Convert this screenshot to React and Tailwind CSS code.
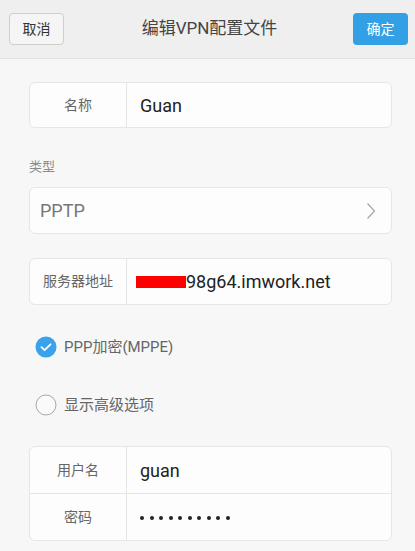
import React from "react";

const font = { fontFamily: 'Roboto, "Noto Sans CJK SC", sans-serif' };

function FieldRow({label, children, last, height}) {
    return (
        <div className={"flex " + height + " " + (last ? "" : "border-b border-[#e6e6e6]")}>
            <div className="w-[97px] shrink-0 flex items-center justify-center border-r border-[#e6e6e6] text-[14px] text-[#666]">
                {label}
            </div>
            <div className="flex items-center pl-[13px] text-[18px] text-[#222]">
                {children}
            </div>
        </div>
    );
}

function Check({checked, label}) {
    return (
        <div className="flex items-center h-[22px] pl-[6px]">
            {checked ? (
                <svg width="22" height="22" viewBox="0 0 22 22">
                    <circle cx="11" cy="11" r="10.5" fill="#3aa2eb"/>
                    <path d="M6.5 11.2 L9.6 14.2 L15.5 8.3" fill="none" stroke="#fff" strokeWidth="1.8" strokeLinecap="round" strokeLinejoin="round"/>
                </svg>
            ) : (
                <svg width="22" height="22" viewBox="0 0 22 22">
                    <circle cx="11" cy="11" r="10" fill="#fafafa" stroke="#a8a8a8" strokeWidth="1"/>
                </svg>
            )}
            <span className="ml-[7px] text-[15px] text-[#666]">{label}</span>
        </div>
    );
}

export default function App() {
    const dots = [0, 1, 2, 3, 4, 5, 6, 7, 8, 9];
    return (
        <div className="w-[415px] h-[551px] bg-[#f7f7f7] overflow-hidden" style={font}>
            <div className="h-[59px] bg-[#efefef] border-b border-[#e2e2e2] flex items-center justify-between pl-[9px] pr-[7px]">
                <button className="w-[55px] h-[32px] rounded-[4px] border border-[#cfcfcf] bg-[#f5f5f5] text-[14px] text-[#333]">
                    取消
                </button>
                <div className="text-[17px] text-[#444] pl-[2px]">编辑VPN配置文件</div>
                <button className="w-[55px] h-[32px] rounded-[4px] bg-[#33a0e6] text-[14px] text-white">
                    确定
                </button>
            </div>

            <div className="pl-[29px] pr-[23px] pt-[23px]">
                <div className="rounded-[6px] border border-[#e6e6e6] bg-[#fdfdfd]">
                    <FieldRow label="名称" height="h-[44px]" last>Guan</FieldRow>
                </div>

                <div className="mt-[31px] text-[13px] text-[#8a8a8a] h-[16px] leading-[16px]">类型</div>

                <div className="mt-[12px] h-[47px] rounded-[6px] border border-[#e6e6e6] bg-[#fdfdfd] flex items-center justify-between pl-[10px] pr-[15px]">
                    <span className="text-[18px] text-[#777]">PPTP</span>
                    <svg width="10" height="18" viewBox="0 0 10 18">
                        <path d="M1.5 1.5 L8.5 9 L1.5 16.5" fill="none" stroke="#a0a0a0" strokeWidth="1.1"/>
                    </svg>
                </div>

                <div className="mt-[24px] rounded-[6px] border border-[#e6e6e6] bg-[#fdfdfd]">
                    <div className="flex h-[45px]">
                        <div className="w-[97px] shrink-0 flex items-center justify-center border-r border-[#e6e6e6] text-[14px] text-[#666]">
                            服务器地址
                        </div>
                        <div className="flex items-center pl-[9px] text-[18px] text-[#222]">
                            <span className="inline-block w-[50px] h-[12px] bg-[#ff0000] mt-[1px]"></span>
                            <span>98g64.imwork.net</span>
                        </div>
                    </div>
                </div>

                <div className="mt-[31px]">
                    <Check checked label="PPP加密(MPPE)"/>
                </div>
                <div className="mt-[36px]">
                    <Check label="显示高级选项"/>
                </div>

                <div className="mt-[30px] rounded-[6px] border border-[#e6e6e6] bg-[#fdfdfd]">
                    <FieldRow label="用户名" height="h-[47px]">guan</FieldRow>
                    <FieldRow label="密码" height="h-[46px]" last>
                        <div className="flex gap-[5.5px] pt-[1px]">
                            {dots.map((d) => (
                                <span key={d} className="block w-[4px] h-[4px] rounded-full bg-[#222]"></span>
                            ))}
                        </div>
                    </FieldRow>
                </div>
            </div>
        </div>
    );
}
